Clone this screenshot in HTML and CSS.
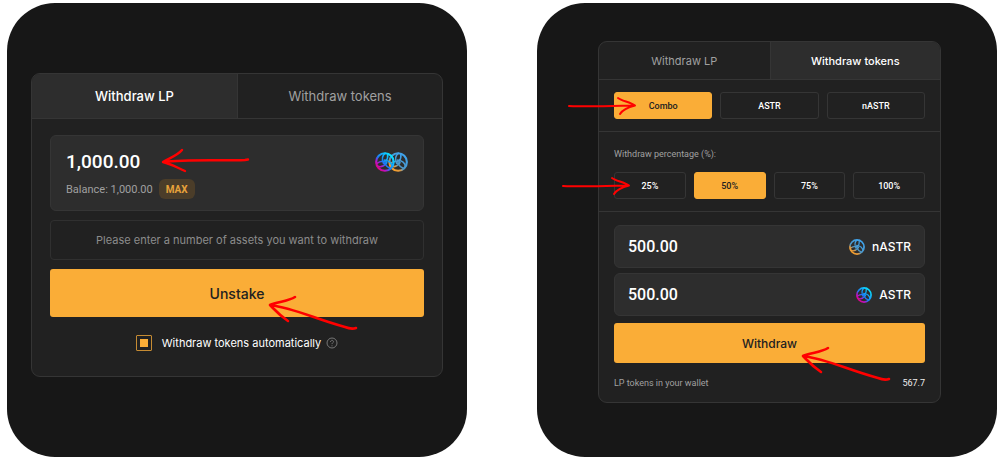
FILE: index.html
```html
<!DOCTYPE html>
<html lang="en">
<head>
<meta charset="utf-8">
<title>Withdraw</title>
<link rel="stylesheet" href="styles.css">
</head>
<body>
<svg class="defs" width="0" height="0" aria-hidden="true">
  <defs>
    <linearGradient id="astr" gradientUnits="userSpaceOnUse" x1="3" y1="21" x2="20" y2="4">
      <stop offset="0" stop-color="#e6007a"/><stop offset=".25" stop-color="#b913c8"/><stop offset=".45" stop-color="#1a7af5"/><stop offset="1" stop-color="#0ae2ff"/>
    </linearGradient>
    <linearGradient id="nastr" gradientUnits="userSpaceOnUse" x1="4" y1="22" x2="17" y2="5">
      <stop offset="0" stop-color="#ffa01e"/><stop offset=".28" stop-color="#e09a45"/><stop offset=".45" stop-color="#4d95c4"/><stop offset="1" stop-color="#3fa2ea"/>
    </linearGradient>
    <g id="knot" fill="none" stroke-linecap="round" stroke-linejoin="round">
      <circle cx="12" cy="12" r="10.6" stroke-width="2.6"/>
      <path stroke-width="1.9" d="M12.4 1.6C8.6 4.2 8.4 9 10.2 13.6M15.4 2.2C15.8 6 15.2 9 13 11.6M20.8 17.5C20.5 13 16.4 10.4 11.5 9.6M18.8 19.8C15.3 18.3 13 16.3 11.8 13.1M2.8 16.9C7 18.8 11.2 16.6 14.3 12.8M1.800 14C4.900 11.7 7.800 10.7 11.200 11.300"/>
    </g>
    <g id="arrow-left-down" fill="none" stroke="#f00" stroke-width="2.6" stroke-linecap="round" stroke-linejoin="round">
      <path d="M28 3C22 7 11 8 3 11C27 14 48 25 78 33C83 35 86 35 89 34M3 11C8 16 12 21 21 27"/>
    </g>
    <g id="arrow-right" fill="none" stroke="#f00" stroke-width="2" stroke-linecap="round" stroke-linejoin="round">
      <path d="M2 10C22 11 46 10 68 9.500M51 2C55 5 63 6 68 9.500C62 11 56 13 53 18"/>
    </g>
  </defs>
</svg>
<main class="stage">
  <section class="panel panel-lp">
    <div class="card">
      <div class="tabs" role="tablist">
        <button class="tab active" type="button" role="tab" aria-selected="true">Withdraw LP</button>
        <button class="tab" type="button" role="tab" aria-selected="false">Withdraw tokens</button>
      </div>
      <form class="form">
        <div class="amount-box">
          <div class="amount-row">
            <input class="amount" type="text" value="1,000.00" aria-label="LP amount">
            <svg class="pair" viewBox="0 0 40 24" aria-hidden="true">
              <g transform="translate(16 0)" stroke="url(#nastr)"><use href="#knot"/></g>
              <use href="#knot" stroke="url(#astr)"/>
            </svg>
          </div>
          <div class="balance">
            <span>Balance: 1,000.00</span>
            <button class="max" type="button">MAX</button>
          </div>
          <svg class="arrow arrow-amount" viewBox="0 0 92 26" aria-hidden="true">
            <path d="M22 3C18 8 10 11 3 15C30 12 60 14 85 13L88 12.500M3 15C11 17 16 20 25 24" fill="none" stroke="#f00" stroke-width="2.4" stroke-linecap="round" stroke-linejoin="round"/>
          </svg>
        </div>
        <p class="notice">Please enter a number of assets you want to withdraw</p>
        <button class="cta" type="button">Unstake
          <svg class="arrow arrow-cta" viewBox="0 0 92 38" aria-hidden="true"><use href="#arrow-left-down"/></svg>
        </button>
        <div class="auto">
          <input class="check" type="checkbox" id="auto" checked>
          <label for="auto">Withdraw tokens automatically</label>
          <svg class="help" viewBox="0 0 12 12" fill="none" stroke="#777" aria-hidden="true">
            <circle cx="6" cy="6" r="5"/>
            <path d="M4.500 4.900C4.500 2.800 7.600 2.900 7.500 4.800C7.400 5.800 6 5.900 6 7.100M6 8.300V9.300"/>
          </svg>
        </div>
      </form>
    </div>
  </section>

  <section class="panel panel-tokens">
    <div class="card">
      <div class="tabs" role="tablist">
        <button class="tab" type="button" role="tab" aria-selected="false">Withdraw LP</button>
        <button class="tab active" type="button" role="tab" aria-selected="true">Withdraw tokens</button>
      </div>
      <div class="group">
        <div class="options">
          <button class="option selected" type="button">Combo
            <svg class="arrow arrow-option" viewBox="0 0 72 20" aria-hidden="true"><use href="#arrow-right"/></svg>
          </button>
          <button class="option" type="button">ASTR</button>
          <button class="option" type="button">nASTR</button>
        </div>
      </div>
      <div class="group">
        <p class="caption">Withdraw percentage (%):</p>
        <div class="options">
          <button class="option" type="button">25%
            <svg class="arrow arrow-percent" viewBox="0 0 72 20" aria-hidden="true"><use href="#arrow-right"/></svg>
          </button>
          <button class="option selected" type="button">50%</button>
          <button class="option" type="button">75%</button>
          <button class="option" type="button">100%</button>
        </div>
      </div>
      <form class="form">
        <div class="tokens">
          <div class="token-box">
            <input class="amount" type="text" value="500.00" aria-label="nASTR amount">
            <svg class="coin" viewBox="0 0 24 24" stroke="url(#nastr)" aria-hidden="true"><use href="#knot"/></svg>
            <span>nASTR</span>
          </div>
          <div class="token-box">
            <input class="amount" type="text" value="500.00" aria-label="ASTR amount">
            <svg class="coin" viewBox="0 0 24 24" stroke="url(#astr)" aria-hidden="true"><use href="#knot"/></svg>
            <span>ASTR</span>
          </div>
        </div>
        <button class="cta" type="button">Withdraw
          <svg class="arrow arrow-cta" viewBox="0 0 92 38" aria-hidden="true"><use href="#arrow-left-down"/></svg>
        </button>
        <div class="wallet"><span>LP tokens in your wallet</span><span class="wallet-value">567.7</span></div>
      </form>
    </div>
  </section>
</main>
</body>
</html>
```
FILE: styles.css
```css
* { box-sizing: border-box; }
body { margin: 0; background: #fff; font-family: Inter, "Liberation Sans", sans-serif; color: #fff; }
button, input { font: inherit; color: inherit; margin: 0; }
button { cursor: pointer; padding: 0; }
p { margin: 0; }
.defs { position: absolute; }

.stage { display: grid; grid-template-columns: 1fr 1fr; gap: 70px; padding: 3px 3px 3px 7px; }
.panel { background: #171717; border-radius: 48px; }
.panel-lp { padding: 70px 24px 78px; }
.panel-tokens { padding: 38px 56px 54px 61px; }
.card { background: #212121; border: 1px solid #353535; border-radius: 9px; }

.tabs { display: grid; grid-template-columns: 1fr 1fr; border-bottom: 1px solid #353535; }
.tab { height: 44px; border: 0; background: none; color: #a0a0a0; font-size: 13px; }
.tab + .tab { border-left: 1px solid #353535; border-top-right-radius: 8px; }
.tab:first-child { border-top-left-radius: 8px; }
.tab.active { background: #2d2d2d; color: #fff; font-weight: 500; }

.form { display: flex; flex-direction: column; }
.panel-lp .form { gap: 9px; padding: 16px 18px; }
.amount { width: 100%; min-width: 0; flex: 1; padding: 0; border: 0; outline: 0; background: none; font-family: Roboto, sans-serif; font-weight: 500; }

.amount-box { position: relative; display: flex; flex-direction: column; gap: 5px; padding: 14px 15px 11px; border: 1px solid #353535; border-radius: 6px; background: #2d2d2d; }
.amount-row { display: flex; align-items: center; }
.amount-row .amount { height: 24px; font-size: 19px; line-height: 24px; }
.pair { width: 33px; height: 20px; }
.balance { display: flex; align-items: center; gap: 6px; color: #a0a0a0; font-family: Roboto, sans-serif; font-size: 11px; }
.max { height: 20px; padding: 0 7px; border: 0; border-radius: 6px; background: #4b3d29; color: #e7a23b; font-size: 10px; font-weight: 700; }
.notice { padding: 9px; border: 1px solid #303030; border-radius: 4px; color: #8c8c8c; font-size: 11px; line-height: 20px; text-align: center; }
.cta { position: relative; height: 48px; border: 0; border-radius: 3px; background: #faad37; color: #212121; font-size: 14px; font-weight: 500; }

.auto { display: flex; align-items: center; justify-content: center; gap: 5px; height: 34px; font-size: 11px; }
.check { appearance: none; width: 16px; height: 16px; margin-right: 5px; padding: 3px; border: 1px solid #c58b33; border-radius: 1px; }
.check:checked { background: #faad37 content-box; }
.help { width: 12px; height: 12px; }

.panel-tokens .tab { height: 37px; font-size: 11px; }
.group { padding: 12px 15px; border-bottom: 1px solid #353535; }
.caption { margin-bottom: 8px; color: #a0a0a0; font-family: Roboto, sans-serif; font-size: 9px; line-height: 20px; }
.options { display: grid; grid-auto-flow: column; grid-auto-columns: 1fr; gap: 8px; }
.option { position: relative; height: 27px; border: 1px solid #353535; border-radius: 3px; background: none; font-family: Roboto, sans-serif; font-size: 9px; font-weight: 500; }
.option.selected { border-color: #faad37; background: #faad37; color: #212121; }
.panel-tokens .form { padding: 13px 15px 9px; }
.tokens { display: grid; gap: 5px; margin-bottom: 7px; }
.token-box { display: flex; align-items: center; gap: 7px; height: 43px; padding: 0 13px; border: 1px solid #353535; border-radius: 6px; background: #2d2d2d; font-size: 12px; font-weight: 500; }
.token-box .amount { font-size: 16px; }
.coin { width: 16px; height: 16px; }
.panel-tokens .cta { height: 40px; margin-bottom: 10px; font-size: 12px; }
.wallet { display: flex; justify-content: space-between; color: #a0a0a0; font-family: Roboto, sans-serif; font-size: 9px; line-height: 20px; }
.wallet-value { color: #eee; }

.arrow { position: absolute; z-index: 1; pointer-events: none; }
.arrow-amount { left: 109px; top: 11px; width: 92px; height: 26px; }
.arrow-cta { left: calc(50% + 30px); top: 25px; width: 92px; height: 38px; }
.panel-tokens .arrow-cta { top: 22px; }
.arrow-option { left: -48px; top: 3px; width: 72px; height: 20px; }
.arrow-percent { left: -54px; top: 3px; width: 72px; height: 20px; }
```
